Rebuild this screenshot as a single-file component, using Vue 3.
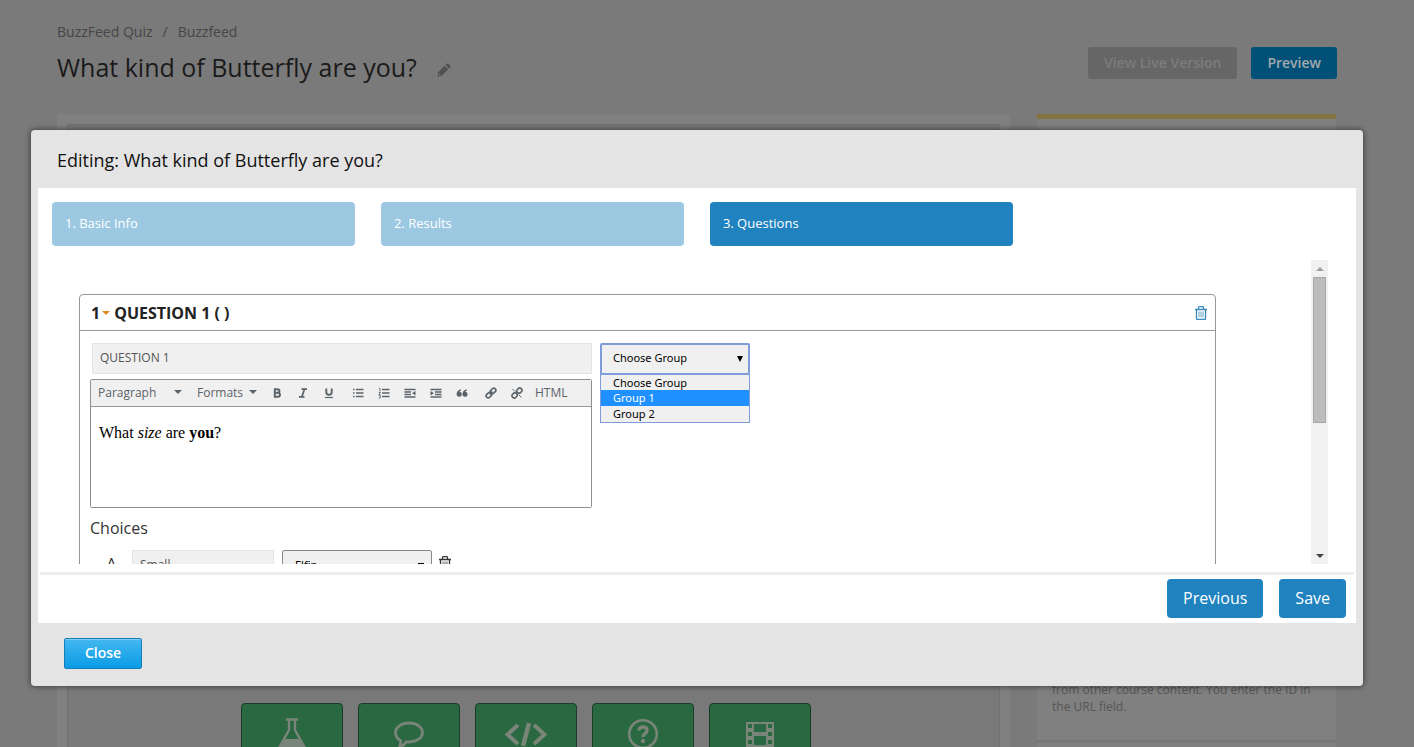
<script setup>
import { ref } from 'vue'

const steps = [
  { label: '1. Basic Info', active: false },
  { label: '2. Results', active: false },
  { label: '3. Questions', active: true },
]
const groups = ['Choose Group', 'Group 1', 'Group 2']
const highlighted = ref('Group 1')
const title = ref('QUESTION 1')
const choice = ref('Small')
</script>

<template>
  <div class="page">
    <header class="masthead">
      <div>
        <nav class="crumbs" aria-label="Breadcrumb">
          <a href="#">BuzzFeed Quiz</a><span>/</span><a href="#">Buzzfeed</a>
        </nav>
        <h1 class="page-title">
          What kind of Butterfly are you?
          <button class="edit" type="button" aria-label="Edit title">
            <svg width="14" height="14" viewBox="0 0 14 14"><path d="M.5 13.500l.8-4.300 6.400-6.400 3.500 3.500-6.400 6.400z" fill="#505050" /><path d="M8.500 2l1.200-1.200q.8-.7 1.600 0l1.900 1.900q.7.800 0 1.600L12 5.500z" fill="#505050" /><path d="M1.800 12.200l.5-2 1.500 1.500z" fill="#7a7a7a" /></svg>
          </button>
        </h1>
      </div>
      <div class="page-actions">
        <button class="view-live" type="button">View Live Version</button>
        <button class="preview" type="button">Preview</button>
      </div>
    </header>

    <div class="columns">
      <main class="unit">
        <div class="unit-inner">
          <div class="unit-body"></div>
          <div class="components">
            <button type="button" aria-label="Advanced">
              <svg width="32" height="36" viewBox="0 0 32 36"><path d="M10 2.500h12M13 2v11L3 31q-1 3 2 3h22q3 0 2-3L19 13V2" fill="none" stroke="#798579" stroke-width="2.400" /><path d="M9 22h14l7 12H2z" fill="#798579" /></svg>
            </button>
            <button type="button" aria-label="Discussion">
              <svg width="32" height="36" viewBox="0 0 32 36"><path d="M16 6c8 0 13.500 4.200 13.500 9.500S24 25 16 25l-3 0q-2.500 4-6.500 5 1.500-3 1-6.500Q2.500 20.500 2.500 15.500C2.500 10.200 8 6 16 6z" fill="none" stroke="#798579" stroke-width="2.800" /></svg>
            </button>
            <button type="button" aria-label="HTML">
              <svg width="44" height="36" viewBox="0 0 44 36"><path d="M14 8L3.500 17.500 14 27M30 8l10.500 9.500L30 27" fill="none" stroke="#798579" stroke-width="4" /><path d="M25 6l-6 23" stroke="#798579" stroke-width="4.500" /></svg>
            </button>
            <button type="button" aria-label="Problem">
              <svg width="32" height="36" viewBox="0 0 32 36"><circle cx="16" cy="17" r="13.800" fill="none" stroke="#798579" stroke-width="2.600" /><path d="M12 13.500q0-3.500 4-3.500t4 3.400q0 2-2.200 3.300-1.800 1-1.800 3.300" fill="none" stroke="#798579" stroke-width="3.400" /><circle cx="16" cy="24" r="2.200" fill="#798579" /></svg>
            </button>
            <button type="button" aria-label="Video">
              <svg width="32" height="36" viewBox="0 0 32 36"><path fill="#798579" fill-rule="evenodd" d="M2 5h28v25H2zM4 7h4v4H4zM4 15h4v4H4zM4 23h4v4H4zM24 7h4v4h-4zM24 15h4v4h-4zM24 23h4v4h-4zM10 7h12v8H10zM10 19h12v9H10z" /></svg>
            </button>
          </div>
        </div>
      </main>
      <aside class="side">
        <div class="side-card">
          <p>from other course content. You enter the ID in the URL field.</p>
        </div>
        <div class="side-next"></div>
      </aside>
    </div>

    <section class="modal" role="dialog" aria-labelledby="modal-title">
      <h2 id="modal-title" class="modal-title">Editing: What kind of Butterfly are you?</h2>
      <div class="modal-body">
        <div class="steps">
          <button v-for="s in steps" :key="s.label" type="button" :class="['step', { active: s.active }]">{{ s.label }}</button>
        </div>

        <div class="scroller">
          <div class="viewport">
            <article class="question">
              <header class="question-head">
                <h3>1<i class="caret orange"></i>QUESTION 1 ( )</h3>
                <button class="icon-btn" type="button" aria-label="Delete question">
                  <svg width="12" height="14" viewBox="0 0 12 14"><path d="M0 3.500h12M3.500 3.500V1.500q0-.8.800-.8h3.400q.8 0 .8.800v2M1.500 3.500v9q0 1 1 1h7q1 0 1-1v-9" fill="none" stroke="#3a8bbd" stroke-width="1.300" /><path d="M4 5.500v6M6 5.500v6M8 5.500v6" stroke="#3a8bbd" stroke-width=".8" /></svg>
                </button>
              </header>
              <div class="question-body">
                <div class="question-grid">
                  <div class="question-main">
                    <input v-model="title" class="field title-field" type="text" aria-label="Question title" />
                    <div class="editor">
                      <div class="toolbar" role="toolbar" aria-label="Formatting">
                        <button class="menu paragraph" type="button">Paragraph<i class="caret"></i></button>
                        <button class="menu formats" type="button">Formats<i class="caret"></i></button>
                        <div class="group">
                          <button class="tool" type="button" aria-label="Bold"><svg width="12" height="12" viewBox="0 0 12 12"><path d="M3.800 2.300h2.700q2 0 2 1.800 0 1.600-2 1.600h-2.700zM3.800 5.800h3q2.200 0 2.200 2t-2.200 2h-3z" fill="none" stroke="#5b636b" stroke-width="1.900" /></svg></button>
                          <button class="tool" type="button" aria-label="Italic"><svg width="12" height="12" viewBox="0 0 12 12"><path d="M4.500 2.200h5.500M2 9.800h5.500M7.500 2L4.800 10" fill="none" stroke="#5b636b" stroke-width="1.700" /></svg></button>
                          <button class="tool" type="button" aria-label="Underline"><svg width="12" height="12" viewBox="0 0 12 12"><path d="M3.300 1.500v3.700q0 2.500 2.700 2.500t2.700-2.500V1.500" fill="none" stroke="#5b636b" stroke-width="1.900" /><path d="M2 10.500h8" stroke="#5b636b" stroke-width="1.200" /></svg></button>
                        </div>
                        <div class="group">
                          <button class="tool" type="button" aria-label="Bullet list"><svg width="12" height="12" viewBox="0 0 12 12"><path d="M1 2.500h1.500M1 6h1.500M1 9.500h1.500M4 2.500h7.500M4 6h7.500M4 9.500h7.500" stroke="#5b636b" stroke-width="1.500" /></svg></button>
                          <button class="tool" type="button" aria-label="Numbered list"><svg width="12" height="12" viewBox="0 0 12 12"><path d="M4 2.500h7.500M4 6h7.500M4 9.500h7.500" stroke="#5b636b" stroke-width="1.500" /><path d="M1 1.500h1v3M.8 5.500h1.500L1 7.300h1.500M.8 8.500h1.500v2.500H.8" fill="none" stroke="#5b636b" stroke-width=".9" /></svg></button>
                          <button class="tool" type="button" aria-label="Decrease indent"><svg width="12" height="12" viewBox="0 0 12 12"><path d="M.5 2.500h11M.5 5h6.500M.5 7.500h6.500M.5 10h11" stroke="#5b636b" stroke-width="1.400" /><path d="M11.500 4v4.500L8 6.250z" fill="#5b636b" /></svg></button>
                          <button class="tool" type="button" aria-label="Increase indent"><svg width="12" height="12" viewBox="0 0 12 12"><path d="M.5 2.500h11M5 5h6.500M5 7.500h6.500M.5 10h11" stroke="#5b636b" stroke-width="1.400" /><path d="M.5 4v4.500L4 6.250z" fill="#5b636b" /></svg></button>
                          <button class="tool" type="button" aria-label="Blockquote"><svg width="12" height="12" viewBox="0 0 12 12"><g fill="#5b636b"><circle cx="3.200" cy="7.200" r="2.500" /><circle cx="9" cy="7.200" r="2.500" /><path d="M.7 7.200Q.7 3.200 4.800 2.200v1.500Q2.800 4.500 2.800 6zM6.500 7.200Q6.500 3.200 10.600 2.200v1.500Q8.600 4.500 8.600 6z" /></g></svg></button>
                        </div>
                        <div class="group">
                          <button class="tool" type="button" aria-label="Insert link"><svg width="12" height="12" viewBox="0 0 12 12"><g fill="none" stroke="#5b636b" stroke-width="1.700" transform="rotate(-45 6 6)"><rect x="0" y="4" width="6" height="4" rx="2" /><rect x="6" y="4" width="6" height="4" rx="2" /><path d="M4 6h4" /></g></svg></button>
                          <button class="tool" type="button" aria-label="Remove link"><svg width="12" height="12" viewBox="0 0 12 12"><g fill="none" stroke="#5b636b" stroke-width="1.600" transform="rotate(-45 6 6)"><rect x="0" y="3.800" width="5.300" height="4.400" rx="2" /><rect x="6.700" y="3.800" width="5.300" height="4.400" rx="2" /></g><path d="M1.500 2l2.500 2.500M8 8l2.500 2.500" stroke="#5b636b" /></svg></button>
                        </div>
                        <button class="menu html" type="button">HTML</button>
                      </div>
                      <div class="editor-text" contenteditable="true" role="textbox" aria-label="Question text"><p>What <em>size</em> are <strong>you</strong>?</p></div>
                    </div>
                  </div>
                  <div class="picker">
                    <select class="select open" aria-label="Group">
                      <option v-for="g in groups" :key="g">{{ g }}</option>
                    </select>
                    <ul class="options">
                      <li v-for="g in groups" :key="g" :class="{ on: g === highlighted }">{{ g }}</li>
                    </ul>
                  </div>
                </div>

                <h4>Choices</h4>
                <div class="choice">
                  <label for="choice-a">A</label>
                  <input id="choice-a" v-model="choice" class="field" type="text" />
                  <select class="select" aria-label="Result for choice A">
                    <option>Elfin</option>
                  </select>
                  <button class="icon-btn" type="button" aria-label="Delete choice">
                    <svg width="12" height="14" viewBox="0 0 12 14"><path d="M0 3.500h12M3.500 3.500V1.500q0-.8.800-.8h3.400q.8 0 .8.800v2M1.500 3.500v9q0 1 1 1h7q1 0 1-1v-9" fill="none" stroke="#333" stroke-width="1.300" /><path d="M4 5.500v6M6 5.500v6M8 5.500v6" stroke="#333" stroke-width=".8" /></svg>
                  </button>
                </div>
              </div>
            </article>
          </div>
          <div class="scrollbar" aria-hidden="true">
            <i class="arrow up"></i>
            <i class="thumb"></i>
            <i class="arrow down"></i>
          </div>
        </div>

        <div class="wizard-actions">
          <button type="button">Previous</button>
          <button type="button">Save</button>
        </div>
      </div>
      <footer class="modal-foot">
        <button class="close" type="button">Close</button>
      </footer>
    </section>
  </div>
</template>

<style>
body {
  background: #7a7a7a;
}
</style>

<style scoped>
* {
  box-sizing: border-box;
}
button,
input,
select {
  font-family: inherit;
  margin: 0;
}
button {
  border: 0;
  padding: 0;
  background: none;
  cursor: pointer;
}
h1, h2, h3, h4, p, ul {
  margin: 0;
  padding: 0;
}
svg {
  display: block;
}
.page {
  position: relative;
  height: 100vh;
  overflow: hidden;
  background: #7a7a7a;
  font-family: "Open Sans", "Noto Sans", sans-serif;
  color: #222;
}
.masthead {
  display: flex;
  justify-content: space-between;
  height: 114px;
  padding: 22px 77px 0 57px;
}
.crumbs {
  display: flex;
  gap: 10px;
  font-size: 14px;
  line-height: 20px;
  color: #464646;
}
.crumbs a {
  color: #464646;
  text-decoration: none;
}
.page-title {
  display: flex;
  align-items: center;
  gap: 20px;
  margin-top: 8px;
  font-size: 25px;
  line-height: 34px;
  font-weight: 400;
  color: #1a1a1a;
}
.edit {
  margin-top: 6px;
}
.page-actions {
  display: flex;
  align-items: flex-start;
  gap: 14px;
  padding-top: 25px;
}
.page-actions button {
  height: 32px;
  padding: 0 16px 2px;
  border-radius: 3px;
  font-size: 14px;
  font-weight: 600;
}
.view-live {
  background: #666;
  color: #7c7c7c;
}
.preview {
  background: #005078;
  color: #a3a9ac;
}
.columns {
  display: flex;
  gap: 27px;
  padding: 0 78px 0 57px;
}
.unit {
  flex: 1;
  padding: 10px 10px 0;
  background: #808080;
}
.unit-inner {
  border: 1px solid #707070;
  border-bottom: 0;
  border-radius: 3px 3px 0 0;
  background: #797979;
}
.unit-body {
  height: 578px;
}
.components {
  display: flex;
  justify-content: center;
  gap: 15px;
  padding-right: 15px;
}
.components button {
  display: flex;
  justify-content: center;
  width: 102px;
  height: 102px;
  padding-top: 13px;
  border: 1px solid #1a3d28;
  border-radius: 4px;
  background: #296840;
}
.side {
  width: 299px;
}
.side-card {
  display: flex;
  align-items: flex-end;
  height: 627px;
  padding: 0 15px 25px;
  border-top: 5px solid #837340;
  border-bottom: 1px solid #757575;
  background: #808080;
}
.side-card p {
  font-size: 12px;
  line-height: 17px;
  color: #555;
}
.side-next {
  height: 40px;
  margin-top: 2px;
  background: #808080;
}
.modal {
  position: absolute;
  top: 130px;
  left: 31px;
  right: 51px;
  padding: 0 7px;
  border-radius: 4px;
  background: #e4e4e4;
  box-shadow: 0 0 6px rgba(0, 0, 0, 0.6);
}
.modal-title {
  height: 58px;
  padding: 0 19px;
  font-size: 18px;
  line-height: 60px;
  font-weight: 400;
  color: #111;
}
.modal-body {
  padding: 14px 0 5px;
  background: #fff;
}
.steps {
  display: flex;
  gap: 2%;
  padding: 0 14px;
}
.step {
  flex: 0 0 23.5%;
  height: 44px;
  padding: 0 13px 2px;
  border-radius: 4px;
  background: #9dc8e2;
  color: #fff;
  font-size: 13px;
  text-align: left;
}
.step.active {
  background: #2083bf;
}
.scroller {
  display: flex;
  height: 304px;
  margin: 14px 28px 8px 41px;
}
.viewport {
  flex: 1;
  overflow: hidden;
  padding: 34px 95px 0 0;
}
.question {
  border: 1px solid #979797;
  border-radius: 4px;
}
.question-head {
  display: flex;
  align-items: center;
  justify-content: space-between;
  height: 36px;
  padding: 0 8px 0 11px;
  border-bottom: 1px solid #979797;
}
.question-head h3 {
  display: flex;
  align-items: center;
  font-size: 16px;
  font-weight: 700;
  color: #222;
}
.caret {
  display: inline-block;
  border: 4px solid transparent;
  border-top-color: #5b636b;
  border-bottom: 0;
}
.caret.orange {
  margin: 0 4px 0 2px;
  border-top-color: #df8a20;
}
.question-body {
  padding: 12px 10px 20px;
}
.question-grid {
  display: flex;
  gap: 8px;
}
.question-main {
  width: 502px;
}
.field {
  display: block;
  height: 31px;
  padding: 0 7px 2px;
  border: 1px solid #e4e4e4;
  border-radius: 0;
  background: #f0f0f0;
  color: #555;
  font-size: 12px;
  outline: 0;
}
.title-field {
  width: 500px;
  margin: 0 0 5px 2px;
}
.editor {
  border: 1px solid #8f8f8f;
  border-radius: 2px;
}
.toolbar {
  display: flex;
  align-items: center;
  height: 27px;
  border-bottom: 1px solid #979797;
  background: #f0f0f0;
}
.menu {
  display: flex;
  align-items: center;
  height: 26px;
  padding: 0 7px 2px;
  font-size: 12px;
  color: #5b636b;
}
.paragraph {
  justify-content: space-between;
  width: 99px;
  padding-right: 8px;
}
.formats {
  gap: 6px;
  width: 74px;
}
.html {
  padding: 0 3px 2px;
}
.group {
  display: flex;
  margin-right: 2px;
}
.group + .group {
  margin-left: 1px;
}
.tool {
  display: flex;
  align-items: center;
  justify-content: center;
  width: 26px;
  height: 26px;
  padding-bottom: 1px;
}
.editor-text {
  height: 100px;
  padding: 17px 8px;
  background: #fff;
  color: #000;
  font-family: "Liberation Serif", serif;
  font-size: 16px;
  line-height: 18px;
  outline: 0;
}
.picker {
  position: relative;
  width: 150px;
}
.select {
  display: block;
  width: 150px;
  height: 32px;
  padding: 0 12px 4px;
  appearance: none;
  border: 1px solid #888;
  border-radius: 2px;
  background-color: #f0f0f0;
  color: #000;
  font-family: "Noto Sans", sans-serif;
  font-size: 11px;
  outline: 0;
}
.select.open {
  border: 2px solid #7f9bd9;
  padding: 0 11px 4px;
}
.picker::after {
  content: "";
  position: absolute;
  top: 13px;
  right: 7px;
  border: 3px solid transparent;
  border-top: 6px solid #000;
  border-bottom: 0;
}
.options {
  position: absolute;
  top: 31px;
  left: 0;
  right: 0;
  padding-bottom: 1px;
  border: 1px solid #7f9bd9;
  background: #f0f0f0;
  list-style: none;
  font-family: "Noto Sans", sans-serif;
  font-size: 11px;
  line-height: 15px;
  color: #000;
}
.options li {
  padding: 0 12px;
}
.options li.on {
  padding-bottom: 1px;
  background: #1e90ff;
  color: #fff;
}
h4 {
  margin-top: 9px;
  font-size: 16px;
  line-height: 22px;
  font-weight: 400;
  color: #333;
}
.choice {
  display: flex;
  gap: 8px;
  margin-top: 11px;
}
.choice label {
  width: 34px;
  padding: 2px 0 0 17px;
  font-size: 14px;
  line-height: 22px;
}
.choice .field {
  width: 142px;
}
.choice .select {
  background-image: linear-gradient(#000, #000);
  background-repeat: no-repeat;
  background-size: 6px 2px;
  background-position: right 7px top 12px;
}
.choice .icon-btn {
  align-self: flex-start;
  margin: 6px 0 0 -1px;
}
.scrollbar {
  display: flex;
  flex-direction: column;
  width: 17px;
  background: #f1f1f1;
}
.arrow {
  width: 17px;
  height: 17px;
  display: flex;
  align-items: center;
  justify-content: center;
}
.arrow::before {
  content: "";
  border: 4px solid transparent;
}
.arrow.up::before {
  border-bottom-color: #a0a0a0;
  border-top: 0;
}
.arrow.down {
  margin-top: auto;
}
.arrow.down::before {
  border-top-color: #444;
  border-bottom: 0;
}
.thumb {
  width: 13px;
  height: 146px;
  margin: 0 2px;
  border: 1px solid #a8a8a8;
  background: #bcbcbc;
}
.wizard-actions {
  display: flex;
  justify-content: flex-end;
  gap: 16px;
  margin: 0 2px;
  padding: 4px 8px 0;
  border-top: 3px solid #eee;
}
.wizard-actions button {
  height: 39px;
  padding: 0 16px 2px;
  border-radius: 4px;
  background: #2083bf;
  color: #fff;
  font-size: 16px;
}
.modal-foot {
  padding: 15px 26px 17px;
}
.close {
  display: block;
  width: 78px;
  height: 31px;
  padding-bottom: 2px;
  border: 1px solid #1580b8;
  border-radius: 2px;
  background: linear-gradient(#44b8f1, #0a9be6);
  box-shadow: inset 0 1px 0 rgba(255, 255, 255, 0.3);
  color: #fff;
  font-size: 14px;
  font-weight: 600;
}
</style>
